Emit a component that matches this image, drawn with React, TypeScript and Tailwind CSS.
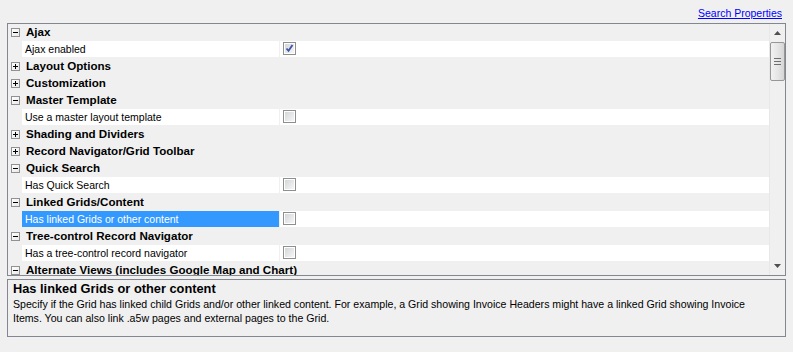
import React from "react";

type Row =
  | { kind: "cat"; label: string; open: boolean }
  | { kind: "prop"; label: string; checked?: boolean; selected?: boolean };

const rows: Row[] = [
  { kind: "cat", label: "Ajax", open: true },
  { kind: "prop", label: "Ajax enabled", checked: true },
  { kind: "cat", label: "Layout Options", open: false },
  { kind: "cat", label: "Customization", open: false },
  { kind: "cat", label: "Master Template", open: true },
  { kind: "prop", label: "Use a master layout template" },
  { kind: "cat", label: "Shading and Dividers", open: false },
  { kind: "cat", label: "Record Navigator/Grid Toolbar", open: false },
  { kind: "cat", label: "Quick Search", open: true },
  { kind: "prop", label: "Has Quick Search" },
  { kind: "cat", label: "Linked Grids/Content", open: true },
  { kind: "prop", label: "Has linked Grids or other content", selected: true },
  { kind: "cat", label: "Tree-control Record Navigator", open: true },
  { kind: "prop", label: "Has a tree-control record navigator" },
  { kind: "cat", label: "Alternate Views (includes Google Map and Chart)", open: true },
];

function Expander({ open }: { open: boolean }) {
  return (
    <div className="relative w-[9px] h-[9px] border border-[#919191] bg-gradient-to-br from-white to-[#e8e8e8] shrink-0">
      <div className="absolute left-[1px] top-[3px] w-[5px] h-[1px] bg-black" />
      {!open && <div className="absolute left-[3px] top-[1px] w-[1px] h-[5px] bg-black" />}
    </div>
  );
}

function Checkbox({ checked }: { checked?: boolean }) {
  return (
    <div className="w-[13px] h-[13px] border border-[#8e8f8f] bg-white p-[1px] shrink-0">
      <div className="w-full h-full bg-gradient-to-br from-[#d4d6d9] to-[#f6f6f6] relative">
        {checked && (
          <svg width="9" height="9" viewBox="0 0 9 9" className="absolute left-0 top-0">
            <path d="M1.5 4.5 L3.5 6.8 L7.5 1" stroke="#3c55a8" strokeWidth="1.8" fill="none" />
          </svg>
        )}
      </div>
    </div>
  );
}

export default function App() {
  return (
    <div
      className="w-[793px] h-[352px] bg-[#f0f0f0] px-[7px] text-black overflow-hidden"
      style={{ fontFamily: '"Liberation Sans", Arial, sans-serif' }}
    >
      <div className="h-[23px] flex items-start justify-end pr-[4px] pt-[6px]">
        <span className="text-[10.5px] leading-[14px] text-[#0000ff] underline">Search Properties</span>
      </div>
      <div className="h-[253px] border border-[#828790] flex">
        <div className="flex-1 overflow-hidden flex flex-col gap-px bg-[#f0f0f0]">
          {rows.map((r, i) =>
            r.kind === "cat" ? (
              <div key={i} className="h-[16px] shrink-0 flex items-center bg-[#f0f0f0] pl-[3px]">
                <Expander open={r.open} />
                <span className="ml-[6px] text-[11.6px] font-bold leading-[16px] whitespace-nowrap">{r.label}</span>
              </div>
            ) : (
              <div key={i} className="h-[16px] shrink-0 flex">
                <div className="w-[14px] bg-[#f0f0f0]" />
                <div
                  className={
                    "w-[257px] pl-[3px] text-[10.5px] leading-[16px] whitespace-nowrap " +
                    (r.selected ? "bg-[#3399ff] text-white" : "bg-white")
                  }
                >
                  {r.label}
                </div>
                <div className="w-px bg-[#f0f0f0]" />
                <div className="flex-1 bg-white pl-[3px] pt-[1px]">
                  <Checkbox checked={r.checked} />
                </div>
              </div>
            )
          )}
        </div>
        <div className="w-[16px] bg-[#f0f0f0] flex flex-col border-l border-[#e8e8e8]">
          <div className="h-[18px] flex items-center justify-center">
            <svg width="7" height="4" viewBox="0 0 7 4">
              <path d="M3.5 0 L7 4 L0 4 Z" fill="#505050" />
            </svg>
          </div>
          <div className="h-[39px] mx-0 border border-[#979797] rounded-[2px] bg-gradient-to-r from-[#f2f2f2] via-[#e6e6e6] to-[#d6d6d6] flex flex-col items-center justify-center gap-[2px]">
            <div className="w-[7px] h-px bg-[#6e6e6e]" />
            <div className="w-[7px] h-px bg-[#6e6e6e]" />
            <div className="w-[7px] h-px bg-[#6e6e6e]" />
          </div>
          <div className="flex-1" />
          <div className="h-[18px] flex items-center justify-center">
            <svg width="7" height="4" viewBox="0 0 7 4">
              <path d="M0 0 L7 0 L3.5 4 Z" fill="#505050" />
            </svg>
          </div>
        </div>
      </div>
      <div className="mt-[3px] h-[58px] border border-[#828790] pl-[5px] pt-px">
        <div className="text-[12.8px] font-bold leading-[16px]">Has linked Grids or other content</div>
        <div className="text-[10.6px] leading-[14px]">
          Specify if the Grid has linked child Grids and/or other linked content. For example, a Grid showing Invoice Headers might have a linked Grid showing Invoice
          <br />
          Items. You can also link .a5w pages and external pages to the Grid.
        </div>
      </div>
    </div>
  );
}
